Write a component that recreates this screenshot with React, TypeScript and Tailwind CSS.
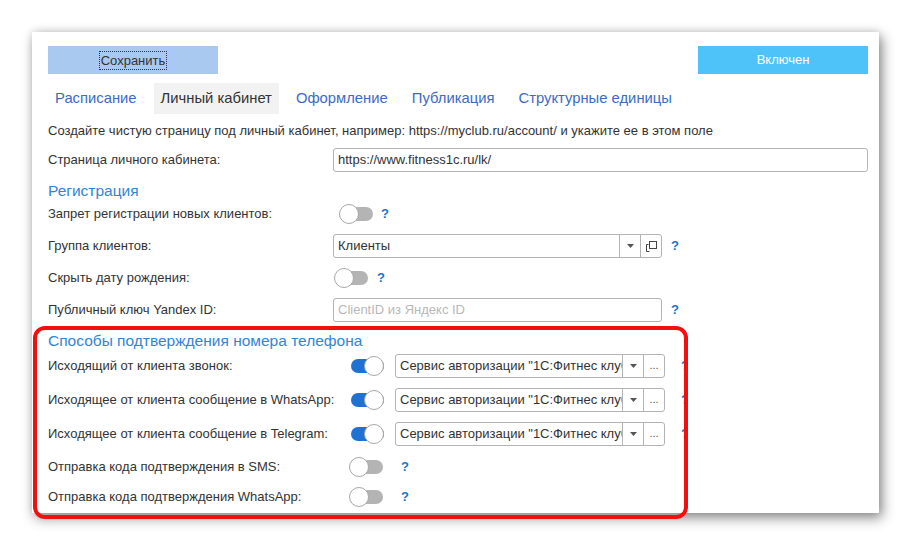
import React from "react";

const Toggle = ({ on = false, className = "" }: { on?: boolean; className?: string }) => (
  <div className={`relative w-[34px] h-[20px] shrink-0 ${className}`}>
    <div
      className={`absolute left-[1px] right-0 top-[3px] h-[14px] rounded-full ${
        on ? "bg-[#1f72d3]" : "bg-[#b4b4b4]"
      }`}
    />
    <div
      className={`absolute top-0 w-[20px] h-[20px] rounded-full bg-white border border-[#a8a8a8] ${
        on ? "right-0" : "left-0"
      }`}
    />
  </div>
);

const Q = ({ className = "" }: { className?: string }) => (
  <span className={`text-[#1b74c9] text-[13px] font-bold shrink-0 ${className}`}>?</span>
);

const Arrow = () => (
  <svg width="7" height="4" viewBox="0 0 7 4">
    <path d="M0 0 L7 0 L3.5 4 Z" fill="#555" />
  </svg>
);

const OpenIcon = () => (
  <svg width="11" height="11" viewBox="0 0 11 11" fill="none" stroke="#444" strokeWidth="1">
    <rect x="3.5" y="0.5" width="7" height="7" />
    <path d="M0.5 3.5 V10.5 H3.5" />
    <path d="M0.5 3.5 H2.5" />
  </svg>
);

const ServiceSelect = () => (
  <div className="flex h-[24px] w-[270px] border border-[#b3b3b3] rounded-[3px] bg-white shrink-0">
    <div className="flex-1 overflow-hidden whitespace-nowrap pl-[4px] text-[13px] leading-[22px] text-[#333]">
      Сервис авторизации "1С:Фитнес клуб"
    </div>
    <div className="w-[21px] border-l border-[#b3b3b3] flex items-center justify-center">
      <Arrow />
    </div>
    <div className="w-[21px] border-l border-[#b3b3b3] flex items-center justify-center text-[11px] text-[#555] leading-none pb-[2px]">
      ...
    </div>
  </div>
);

export default function App() {
  return (
    <div
      className="w-[911px] h-[545px] bg-white pt-[32px] pl-[32px] overflow-hidden"
      style={{ fontFamily: '"Liberation Sans", Arial, sans-serif' }}
    >
      <div className="w-[847px] h-[481px] bg-white shadow-[3px_5px_12px_rgba(0,0,0,0.45),0_-1px_8px_rgba(0,0,0,0.12)] pt-[14px] pl-[16px] pr-[11px] text-[#333]">
        {/* Buttons */}
        <div className="flex justify-between h-[28px]">
          <div className="w-[170px] h-[28px] bg-[#a9c9f0] flex items-center justify-center">
            <span className="text-[13px] text-[#333] border border-dotted border-[#333] px-[1px] leading-[17px]">
              Сохранить
            </span>
          </div>
          <div className="w-[170px] h-[28px] bg-[#4ec3f9] flex items-center justify-center text-[13px] text-white">
            Включен
          </div>
        </div>

        {/* Tabs */}
        <div className="flex gap-[10px] mt-[9px] h-[31px] text-[14.8px]">
          <div className="px-[7px] flex items-center text-[#3d6ac6]">Расписание</div>
          <div className="px-[7px] flex items-center bg-[#f2f2f2] text-[#333]">Личный кабинет</div>
          <div className="px-[7px] flex items-center text-[#3d6ac6]">Оформление</div>
          <div className="px-[7px] flex items-center text-[#3d6ac6]">Публикация</div>
          <div className="px-[7px] flex items-center text-[#3d6ac6]">Структурные единицы</div>
        </div>

        <div className="mt-[9px] text-[13px] leading-[16px]">
          Создайте чистую страницу под личный кабинет, например: https://myclub.ru/account/ и укажите ее в этом поле
        </div>

        <div className="flex items-center mt-[9px] h-[24px]">
          <div className="w-[285px] shrink-0 text-[13px]">Страница личного кабинета:</div>
          <div className="flex-1 h-[24px] border border-[#b3b3b3] rounded-[3px] pl-[4px] text-[13px] leading-[22px]">
            https://www.fitness1c.ru/lk/
          </div>
        </div>

        <div className="mt-[9px] text-[15.5px] leading-[20px] text-[#2f86d8]">Регистрация</div>

        <div className="flex items-center mt-[3px] h-[20px]">
          <div className="w-[285px] shrink-0 text-[13px]">Запрет регистрации новых клиентов:</div>
          <Toggle className="ml-[6px]" />
          <Q className="ml-[8px]" />
        </div>

        <div className="flex items-center mt-[10px] h-[24px]">
          <div className="w-[285px] shrink-0 text-[13px]">Группа клиентов:</div>
          <div className="flex h-[24px] w-[329px] border border-[#b3b3b3] rounded-[3px]">
            <div className="flex-1 pl-[4px] text-[13px] leading-[22px]">Клиенты</div>
            <div className="w-[21px] border-l border-[#b3b3b3] flex items-center justify-center">
              <Arrow />
            </div>
            <div className="w-[21px] border-l border-[#b3b3b3] flex items-center justify-center">
              <OpenIcon />
            </div>
          </div>
          <Q className="ml-[9px]" />
        </div>

        <div className="flex items-center mt-[10px] h-[20px]">
          <div className="w-[285px] shrink-0 text-[13px]">Скрыть дату рождения:</div>
          <Toggle className="ml-[1px]" />
          <Q className="ml-[9px]" />
        </div>

        <div className="flex items-center mt-[10px] h-[24px]">
          <div className="w-[285px] shrink-0 text-[13px]">Публичный ключ Yandex ID:</div>
          <div className="h-[24px] w-[329px] border border-[#b3b3b3] rounded-[3px] pl-[4px] text-[13px] leading-[22px] text-[#b8b8b8]">
            ClientID из Яндекс ID
          </div>
          <Q className="ml-[9px]" />
        </div>

        {/* Highlighted section */}
        <div className="relative mt-[4px] ml-[-15px] w-[655px] h-[193px] border-[4px] border-[#f01010] rounded-[12px] overflow-hidden pl-[11px] pt-[1px]">
          <div className="text-[15.5px] leading-[20px] text-[#2f86d8] whitespace-nowrap">
            Способы подтверждения номера телефона
          </div>

          {[
            "Исходящий от клиента звонок:",
            "Исходящее от клиента сообщение в WhatsApp:",
            "Исходящее от клиента сообщение в Telegram:",
          ].map((label, i) => (
            <div key={i} className={`flex items-center h-[24px] ${i === 0 ? "mt-[3px]" : "mt-[10px]"}`}>
              <div className="w-[302px] shrink-0 text-[13px] whitespace-nowrap">{label}</div>
              <Toggle on />
              <div className="ml-[11px] shrink-0">
                <ServiceSelect />
              </div>
              <Q className="ml-[16px]" />
            </div>
          ))}

          <div className="flex items-center mt-[11px] h-[20px]">
            <div className="w-[301px] shrink-0 text-[13px]">Отправка кода подтверждения в SMS:</div>
            <Toggle />
            <Q className="ml-[18px]" />
          </div>
          <div className="flex items-center mt-[10px] h-[20px]">
            <div className="w-[301px] shrink-0 text-[13px]">Отправка кода подтверждения WhatsApp:</div>
            <Toggle />
            <Q className="ml-[18px]" />
          </div>
        </div>
      </div>
    </div>
  );
}
